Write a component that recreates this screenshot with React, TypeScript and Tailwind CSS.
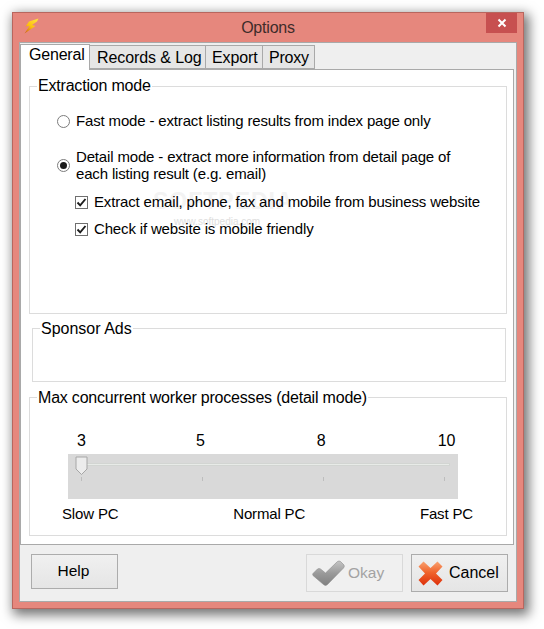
const FONT = "font-['Liberation_Sans',Arial,sans-serif]"
const LABEL = 'text-[15px] tracking-[-0.16px]'

function Radio({ checked }: { checked?: boolean }) {
  return (
    <span className="flex h-[13px] w-[13px] shrink-0 items-center justify-center rounded-full border border-[#7c7c7c] bg-white">
      {checked && <span className="h-[7px] w-[7px] rounded-full bg-[#1a1a1a]" />}
    </span>
  )
}

function Checkbox() {
  return (
    <span className="flex h-[13px] w-[13px] shrink-0 items-center justify-center border border-[#6f6f6f] bg-white">
      <svg width="11" height="11" viewBox="0 0 11 11">
        <path d="M1.5 5.5 L4.2 8.4 L9.5 2" fill="none" stroke="#1c1c1c" strokeWidth="1.9" />
      </svg>
    </span>
  )
}

function BoltIcon() {
  return (
    <svg width="15" height="16" viewBox="0 0 15 16">
      <defs>
        <linearGradient id="bolt" x1="0.8" y1="0" x2="0.2" y2="1">
          <stop offset="0" stopColor="#ffe23a" />
          <stop offset="0.55" stopColor="#fdc00f" />
          <stop offset="1" stopColor="#d06a14" />
        </linearGradient>
      </defs>
      <path d="M14.5 0.5 L5 3.5 L1.5 8.5 L5.5 8 L0.5 15.5 L11.5 8 L8 7 L13 3.5 Z" fill="url(#bolt)" />
    </svg>
  )
}

function CheckIcon() {
  return (
    <svg width="33" height="27" viewBox="0 0 33 27">
      <defs>
        <linearGradient id="chk" x1="0" y1="0" x2="0" y2="1">
          <stop offset="0" stopColor="#c4c4c4" />
          <stop offset="0.5" stopColor="#9a9a9a" />
          <stop offset="1" stopColor="#808080" />
        </linearGradient>
      </defs>
      <path
        d="M1 13.5 L5.5 9 Q7 8 8.5 9 L13.5 13 L25.5 1.5 Q27 0.5 28.5 1.5 L32 5 Q32.8 6.5 31.5 8 L15.5 24.5 Q13.5 26.5 11.5 24.5 L1 15.5 Q0.4 14.5 1 13.5 Z"
        fill="url(#chk)"
        stroke="#8c8c8c"
        strokeWidth="0.6"
      />
    </svg>
  )
}

function CrossIcon() {
  return (
    <svg width="25" height="25" viewBox="0 0 25 25">
      <defs>
        <linearGradient id="crs" x1="0" y1="0" x2="0" y2="1">
          <stop offset="0" stopColor="#f9a271" />
          <stop offset="0.45" stopColor="#f0642c" />
          <stop offset="1" stopColor="#dd2f0a" />
        </linearGradient>
      </defs>
      <path
        d="M5.5 0.5 L12.5 7 L19.5 0.5 L24.5 5.5 L18 12.5 L24.5 19 L19.5 24.5 L12.5 18 L5.5 24.5 L0.5 19 L7 12.5 L0.5 5.5 Z"
        fill="url(#crs)"
      />
    </svg>
  )
}

const TICKS = [0, 1, 2, 3]

export default function App() {
  return (
    <div className={`${FONT} h-[629px] w-[544px] overflow-hidden bg-white pl-[12px] pt-[12px] text-[16px] leading-[18px] text-black`}>
      <div className="flex h-[597px] w-[512px] flex-col border border-[#b8665e] bg-[#e6877d] shadow-[3px_4px_11px_2px_rgba(0,0,0,0.55)]">
        {/* title bar */}
        <div className="relative flex h-[29px] shrink-0 items-center justify-center">
          <span className="absolute left-[11px] top-[5px]"><BoltIcon /></span>
          <span className="mt-[1px] tracking-[-0.2px] text-[#3e2c2a]">Options</span>
          <span className="absolute right-[6px] top-0 flex h-[20px] w-[31px] items-center justify-center bg-[#c75050]">
            <svg width="10" height="10" viewBox="0 0 10 10">
              <path d="M1.5 1.5 L8.5 8.5 M8.5 1.5 L1.5 8.5" stroke="#fff" strokeWidth="2" />
            </svg>
          </span>
        </div>

        {/* dialog body */}
        <div className="ml-[6px] mr-[6px] flex h-[560px] flex-col border border-[#a9a9a9] bg-[#efefef]">
          {/* tabs */}
          <div className="relative z-10 flex h-[26px] shrink-0 items-end">
            <div className="-mb-px h-[26px] w-[70px] border-x border-t border-[#a9a9a9] bg-white pl-[8px] pt-[1px] tracking-[-0.2px]">General</div>
            <div className="h-[24px] w-[116px] border-y border-r border-[#a9a9a9] bg-[#e6e6e6] pl-[7px] pt-[3px] tracking-[-0.1px]">Records &amp; Log</div>
            <div className="h-[24px] w-[57px] border-y border-r border-[#a9a9a9] bg-[#e6e6e6] pl-[6px] pt-[3px] tracking-[-0.1px]">Export</div>
            <div className="h-[24px] w-[52px] border-y border-r border-[#a9a9a9] bg-[#e6e6e6] pl-[6px] pt-[3px] tracking-[-0.2px]">Proxy</div>
          </div>

          {/* tab pane */}
          <div className="h-[476px] w-[494px] shrink-0 border border-[#a9a9a9] bg-white pl-[8px] pr-[6px] pt-[7px]">
            <fieldset className="relative h-[237px] border border-[#dcdcdc]">
              <legend className="ml-[7px] px-px tracking-[-0.2px]">Extraction mode</legend>
              <span className="absolute left-[123px] top-[95px] text-[23px] font-bold tracking-[1px] leading-none text-[#f3f3f3]">SOFTPEDIA</span>
              <span className="absolute left-[144px] top-[122px] text-[10px] leading-none text-[#dedede]">www.softpedia.com</span>
              <div className={`relative ml-[27px] mt-[17px] flex items-center gap-[6px] ${LABEL}`}>
                <Radio />
                <span>Fast mode - extract listing results from index page only</span>
              </div>
              <div className={`relative ml-[27px] mt-[18px] flex items-center gap-[6px] leading-[17px] ${LABEL}`}>
                <Radio checked />
                <span className="w-[400px]">Detail mode - extract more information from detail page of each listing result (e.g. email)</span>
              </div>
              <div className={`relative ml-[45px] mt-[11px] flex items-center gap-[6px] ${LABEL}`}>
                <Checkbox />
                <span>Extract email, phone, fax and mobile from business website</span>
              </div>
              <div className={`relative ml-[45px] mt-[9px] flex items-center gap-[6px] ${LABEL}`}>
                <Checkbox />
                <span>Check if website is mobile friendly</span>
              </div>
            </fieldset>

            <fieldset className="ml-[3px] mr-px mt-[5px] h-[63px] border border-[#dcdcdc]">
              <legend className="ml-[7px] h-[18px] px-px pt-px">Sponsor Ads</legend>
            </fieldset>

            <fieldset className="mt-[6px] h-[148px] border border-[#dcdcdc]">
              <legend className="ml-[7px] h-[18px] px-px pt-px tracking-[-0.2px]">Max concurrent worker processes (detail mode)</legend>

              <div className="ml-[47px] mt-[26px] flex">
                <span>3</span>
                <span className="ml-[110px]">5</span>
                <span className="ml-[112px]">8</span>
                <span className="ml-[112px]">10</span>
              </div>

              {/* slider */}
              <div className="relative ml-[38px] mt-[4px] h-[45px] w-[390px] bg-[#d9d9d9] pl-[13px] pt-[9px]">
                <div className="h-[3px] w-[369px] border border-[#d2d5d2] bg-[#e8ebe8]" />
                <div className="mt-[11px] flex w-[364px] justify-between">
                  {TICKS.map((t) => (
                    <span key={t} className="h-[4px] w-px bg-[#bdbdbd]" />
                  ))}
                </div>
                <svg className="absolute left-[7px] top-[2px]" width="13" height="20" viewBox="0 0 13 20">
                  <path d="M1 1 H12 V13 L6.5 18.5 L1 13 Z" fill="#ececec" stroke="#a6a6a6" />
                </svg>
              </div>

              <div className={`ml-[32px] mt-[6px] flex w-[411px] justify-between ${LABEL}`}>
                <span>Slow PC</span>
                <span>Normal PC</span>
                <span>Fast PC</span>
              </div>
            </fieldset>
          </div>

          {/* footer */}
          <div className="flex items-start pl-[11px] pr-[8px] pt-[9px] text-[15.5px]">
            <button className="h-[35px] w-[87px] border border-[#acacac] bg-linear-to-b from-[#f0f0f0] to-[#e5e5e5] pb-[2px] pr-[2px]">Help</button>
            <button className="ml-auto flex h-[38px] w-[97px] items-center border border-[#d9d9d9] bg-[#f0f0f0] pl-[5px] text-[#a3a3a3]">
              <CheckIcon />
              <span className="ml-[3px]">Okay</span>
            </button>
            <button className="ml-[8px] flex h-[38px] w-[97px] items-center border border-[#acacac] bg-linear-to-b from-[#f0f0f0] to-[#e5e5e5] pl-[6px]">
              <CrossIcon />
              <span className="ml-[6px] text-[16px]">Cancel</span>
            </button>
          </div>
        </div>
      </div>
    </div>
  )
}
